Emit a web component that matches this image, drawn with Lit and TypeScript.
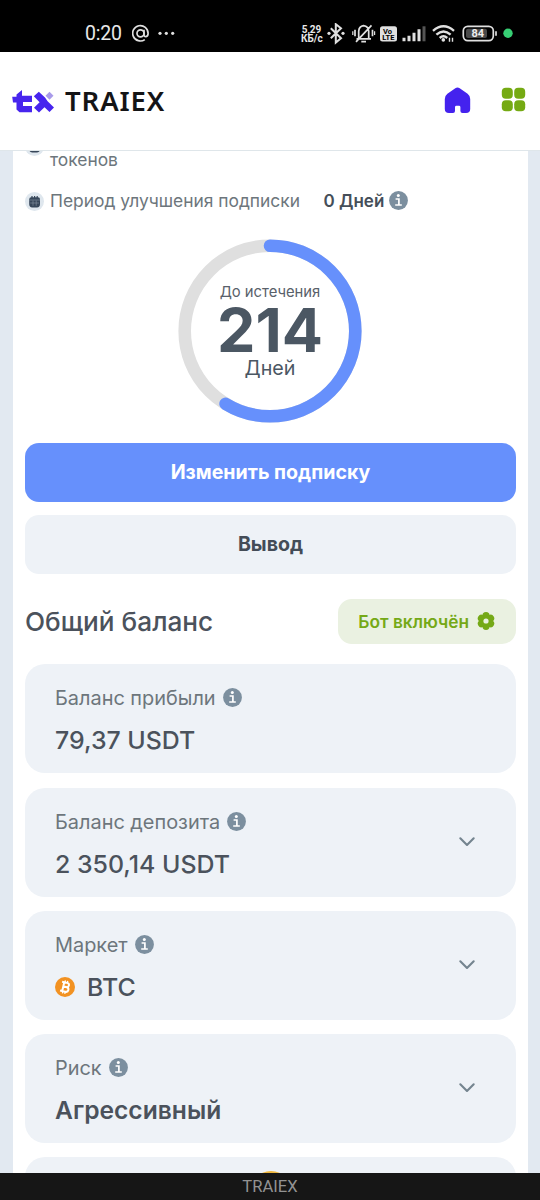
import { LitElement, html, css, svg, nothing } from "lit";
import { customElement, property } from "lit/decorators.js";
import { classMap } from "lit/directives/class-map.js";

const infoIcon = html`<svg class="info" viewBox="0 0 19 19" width="19" height="19">
  <circle cx="9.5" cy="9.5" r="9.4" fill="#7c8f9f" />
  <circle cx="9.3" cy="4.6" r="1.5" fill="#fff" />
  <path d="M6.6 8H9.9V13.6M6.2 14H12.8" fill="none" stroke="#fff" stroke-width="1.7" />
</svg>`;

const coinIcon = html`<svg class="coin" viewBox="0 0 20 20" width="20" height="20">
  <circle cx="10" cy="10" r="10" fill="#f29222" />
  <g transform="rotate(13 10 10)" fill="none" stroke="#fff" stroke-width="2">
    <path d="M6 5.5H11.2C14.2 5.5 14.2 9.8 11.2 9.8H8.2M11.2 9.8C14.9 9.8 14.9 14.6 11.2 14.6H6M8.2 5.5V14.6" />
    <path d="M8.9 3.4V5.4M11.3 3.4V5.4M8.9 14.7V16.7M11.3 14.7V16.7" stroke-width="1.3" />
  </g>
</svg>`;

const calendarIcon = html`<svg class="cal" viewBox="0 0 19 19" width="19" height="19">
  <circle cx="9.5" cy="9.5" r="9.5" fill="#dfe7ee" />
  <path d="M4.2 7.2Q4.2 5.2 6.2 5.2H13Q15 5.2 15 7.2V12Q15 15.4 12 15.4H7.2Q4.2 15.4 4.2 12Z" fill="#37475a" />
  <path d="M7 4V6.4M9.6 4V6.4M12.2 4V6.4" stroke="#37475a" stroke-width="1.2" />
  <path d="M4.2 8H15M5.2 11H14M8 8.5V13.8M11.2 8.5V13.8" stroke="#8795a3" stroke-width=".6" />
</svg>`;

@customElement("status-bar")
export class StatusBar extends LitElement {
  static styles = css`
    :host {
      display: flex;
      align-items: center;
      box-sizing: border-box;
      height: 52px;
      padding: 15px 27px 0 85px;
      background: #000;
      color: #e8e8e8;
      font-family: Roboto, sans-serif;
    }
    .time { font-size: 19.5px; letter-spacing: -0.2px; width: 47px; line-height: 22px; }
    .left { display: block; flex: none; }
    .rate { margin-left: auto; width: 21px; font-size: 10px; line-height: 9px; font-weight: 700; text-align: center; white-space: nowrap; }
    .icons { display: block; flex: none; margin-left: 5px; }
    .small { font: 700 7.5px Roboto, sans-serif; }
    .level { font: 700 11px Roboto, sans-serif; }
  `;
  render() {
    return html`
      <span class="time">0:20</span>
      <svg class="left" width="44" height="20" viewBox="132 23.7 44 20" fill="none" stroke="#e0e0e0" stroke-width="1.7">
        <circle cx="140.5" cy="33" r="3.5" />
        <path d="M144 29.5V34Q144 36.6 146 36.4Q148.1 36 148.1 33A7.7 7.7 0 1 0 144.8 39.3" />
        <g fill="#e0e0e0" stroke="none"><circle cx="160" cy="33" r="1.6" /><circle cx="166.3" cy="33" r="1.6" /><circle cx="172.7" cy="33" r="1.6" /></g>
      </svg>
      <span class="rate">5,29<br />КБ/с</span>
      <svg class="icons" width="186" height="22" viewBox="327 22.7 186 22" fill="none" stroke="#e0e0e0" stroke-width="1.7">
        <path d="M330.8 28L341 38L335.8 42.3V23.9L341 28L330.8 38" stroke-width="2" />
        <g fill="#e0e0e0" stroke="none"><circle cx="329" cy="33" r="1.6" /><circle cx="343" cy="33" r="1.6" /></g>
        <path d="M356.5 38.5H371M358.7 38V31Q359 26 363.5 25.4Q368.6 26 368.7 31V38M371.5 25L356 41.5M355 29.5V36M372.5 29.5V36M361.3 41.4H366" />
        <path d="M352.8 31V34.7M374.6 31V34.7" stroke-width="1.2" />
        <rect x="380" y="26" width="17" height="15.3" rx="2.5" fill="#e0e0e0" stroke="none" />
        <text class="small" x="383" y="33.4" fill="#000" stroke="none">Vo</text>
        <text class="small" x="382.3" y="40.2" fill="#000" stroke="none">LTE</text>
        <g stroke-width="3"><path d="M404 37.5V41M409 35.5V41M414 32.5V41M419 29V41" /><path d="M424 26V41" stroke="#555" /></g>
        <g stroke-width="2.4"><path d="M433 30.5Q443.5 21.5 454 30.5M436.4 34.3Q443.5 28 450.6 34.3M439.7 37.7Q443.5 34.3 447.2 37.7" /></g>
        <circle cx="443.3" cy="39.6" r="1.8" fill="#e0e0e0" stroke="none" />
        <path d="M449.5 37.5V41.5M452.5 37.5V41.5" stroke-width="1.4" />
        <rect x="463.3" y="26" width="30" height="14.3" rx="4.5" />
        <rect x="466" y="28.5" width="21" height="9.3" rx="2" fill="#4a4a4a" stroke="none" />
        <path d="M496 31V35.5" />
        <text class="level" x="471.5" y="37.2" fill="#eee" stroke="none">84</text>
        <circle cx="508" cy="33" r="4.7" fill="#37cf74" stroke="none" />
      </svg>
    `;
  }
}

@customElement("site-header")
export class SiteHeader extends LitElement {
  static styles = css`
    :host {
      display: flex;
      align-items: center;
      box-sizing: border-box;
      height: 99px;
      padding: 0 14px 0 12px;
      background: #fff;
      border-bottom: 1px solid #dfe6ea;
    }
    .logo { display: block; margin-top: 1px; }
    .brand { margin-left: 10px; font: 600 27.5px/32px "Noto Sans", sans-serif; letter-spacing: 0.9px; color: #141416; }
    .home { display: block; margin: -1px 0 0 auto; }
    .apps { display: block; margin: -4px 0 0 30px; }
  `;
  render() {
    return html`
      <svg class="logo" width="43" height="24" viewBox="12 90 43 24">
        <path d="M16.5 94.5L22 90V95.8H32V102H23V106H32V112.3H19.5L16.5 109.5V102.5H13L12.2 96.8H16.5Z" fill="#4725ee" />
        <path d="M33.8 96.3L38.8 91.8L45 97.6L47.6 101.2L54 107.5L49.5 112L44.5 107.2L39 112.6L34 107.7L39.6 102.2Z" fill="#4725ee" />
        <path d="M49.5 91.8L53.5 95.8L49.5 99.8L45.5 95.8Z" fill="#a99bea" />
      </svg>
      <span class="brand">TRAIEX</span>
      <svg class="home" width="27" height="27" viewBox="0 0 27 27">
        <path d="M11.3 1.2Q13.5 -.1 15.7 1.2L23.6 6.8Q26.2 8.8 26.2 12V22Q26.2 26 22 26H18.5Q16.4 26 16.4 24V20.2Q16.4 18.8 15 18.8H12.4Q11 18.8 11 20.2V24Q11 26 9 26H5Q.8 26 .8 22V12Q.8 8.8 3.4 6.8Z" fill="#4422ee" />
      </svg>
      <svg class="apps" width="25" height="25" viewBox="0 0 25 25" fill="#75aa13">
        <rect x=".8" y=".8" width="11" height="11" rx="4" /><rect x="13.2" y=".8" width="11" height="11" rx="4" />
        <rect x=".8" y="13.2" width="11" height="11" rx="4" /><rect x="13.2" y="13.2" width="11" height="11" rx="4" />
      </svg>
    `;
  }
}

@customElement("days-ring")
export class DaysRing extends LitElement {
  @property({ type: Number }) days = 0;
  @property({ type: Number }) total = 365;
  static styles = css`
    :host { display: grid; width: 184px; height: 184px; color: #4b5763; }
    .ring, .text { grid-area: 1 / 1; }
    .ring { display: block; }
    .text { display: flex; flex-direction: column; align-items: center; padding: 44px 0 0 1px; }
    .cap { font-size: 14.8px; line-height: 18px; color: #59616a; }
    .num { font-size: 61px; line-height: 58px; font-weight: 700; }
    .unit { font-size: 19.7px; line-height: 19px; }
  `;
  render() {
    const r = 85.3;
    const length = 2 * Math.PI * r;
    const filled = (length * this.days) / this.total;
    return html`
      <svg class="ring" viewBox="0 0 184 184" fill="none" stroke-width="12.6">
        <circle cx="92" cy="92" r=${r} stroke="#dfdfdf" />
        <circle cx="92" cy="92" r=${r} stroke="#6690fc" stroke-linecap="round"
          stroke-dasharray="${filled} ${length}" transform="rotate(-90 92 92)" />
      </svg>
      <div class="text">
        <span class="cap">До истечения</span>
        <span class="num">${this.days}</span>
        <span class="unit">Дней</span>
      </div>
    `;
  }
}

@customElement("balance-card")
export class BalanceCard extends LitElement {
  @property() label = "";
  @property() value = "";
  @property({ type: Boolean }) expandable = false;
  @property({ type: Boolean }) coin = false;
  @property({ type: Boolean }) strong = false;
  static styles = css`
    :host {
      display: flex;
      align-items: center;
      justify-content: space-between;
      box-sizing: border-box;
      height: 109px;
      padding: 0 40px 0 30px;
      border-radius: 20px;
      background: #eef2f7;
    }
    .body { display: flex; flex-direction: column; gap: 13px; padding-top: 2px; }
    .label { display: flex; align-items: center; gap: 7px; font-size: 19.9px; line-height: 28px; color: #6d767c; }
    .value { display: flex; align-items: center; gap: 12px; font-size: 24.9px; line-height: 30px; font-weight: 500; color: #4b525c; }
    .value.strong { font-size: 24.6px; font-weight: 600; }
    .info, .coin, .chevron { display: block; flex: none; }
    .info { margin-top: -1px; }
    .chevron { margin-top: -1px; }
  `;
  render() {
    return html`
      <div class="body">
        <div class="label">${this.label}${infoIcon}</div>
        <div class=${classMap({ value: true, strong: this.strong })}>${this.coin ? coinIcon : nothing}<span>${this.value}</span></div>
      </div>
      ${this.expandable
        ? html`<svg class="chevron" width="18" height="12" viewBox="0 0 18 12">
            <path d="M2.3 2.3L9 9L15.7 2.3" fill="none" stroke="#74848f" stroke-width="2.1" stroke-linecap="round" stroke-linejoin="round" />
          </svg>`
        : nothing}
    `;
  }
}

const petals = [0, 60, 120, 180, 240, 300].map(
  (a) => svg`<circle cx="9" cy="3.7" r="3.6" transform="rotate(${a} 9 9)" />`
);

const cards = [
  { label: "Баланс прибыли", value: "79,37 USDT", expandable: false, coin: false, strong: false },
  { label: "Баланс депозита", value: "2 350,14 USDT", expandable: true, coin: false, strong: false },
  { label: "Маркет", value: "BTC", expandable: true, coin: true, strong: false },
  { label: "Риск", value: "Агрессивный", expandable: true, coin: false, strong: true },
];

@customElement("app-root")
export class AppRoot extends LitElement {
  static styles = css`
    :host {
      display: flex;
      flex-direction: column;
      height: 1200px;
      overflow: hidden;
      background: #e2e9f1;
      font-family: Inter, sans-serif;
    }
    .panel {
      flex: 1;
      min-height: 0;
      overflow: hidden;
      margin: 0 12px 0 13px;
      padding: 0 12px;
      background: #fff;
      display: flex;
      flex-direction: column;
    }
    .panel > * { flex: none; }
    .row { display: flex; align-items: center; height: 24px; font-size: 17.4px; color: #6d767c; white-space: nowrap; }
    .row.cut { height: 38px; margin-top: -19px; }
    .row.cut .cal { margin-top: -10px; }
    .row.cut .name { align-self: flex-end; }
    .row.period { margin-top: 19px; }
    .cal, .info { display: block; flex: none; }
    .info { margin-top: -1px; }
    .name { margin-left: 6px; }
    .period .name { margin-top: -1px; }
    .days { margin: 0 5px 0 23.5px; font-size: 17px; font-weight: 600; color: #454e59; }
    .ring { align-self: center; margin: 26px 2px 0 0; }
    .btn {
      border: 0;
      padding: 0 0 2px;
      height: 59px;
      border-radius: 14px;
      font: 700 19.6px Inter, sans-serif;
      background: #eef2f7;
      color: #444c57;
    }
    .btn.primary { margin: 20px 0 13px; background: #6690fc; color: #fff; }
    .head { display: flex; align-items: center; justify-content: space-between; height: 45px; margin: 25px 0 20px; }
    .title { margin: 0; font-size: 26.2px; line-height: 32px; font-weight: 500; color: #4b525c; }
    .pill {
      display: flex; align-items: center; gap: 8px;
      box-sizing: border-box; height: 45px; padding: 0 21px 1px 20px; border-radius: 14px;
      background: #eaf1e1; color: #75a917; font-size: 17.3px; font-weight: 600;
    }
    .flower { display: block; }
    .cards { display: flex; flex-direction: column; gap: 14.6px; }
    .cards > :nth-child(4) { margin-top: -1px; }
    .next { height: 109px; border-radius: 20px; background: #eef2f7; display: flex; justify-content: center; align-items: flex-start; }
    .token { width: 44px; height: 44px; margin-top: 13.6px; border-radius: 50%; background: #eeb63e; }
    .footer { flex: none; height: 27px; background: #161616; color: #929292; text-align: center; font: 400 16.6px/27px Roboto, sans-serif; }
  `;
  render() {
    return html`
      <status-bar></status-bar>
      <site-header></site-header>
      <main class="panel">
        <div class="row cut">${calendarIcon}<span class="name">токенов</span></div>
        <div class="row period">
          ${calendarIcon}<span class="name">Период улучшения подписки</span>
          <span class="days">0 Дней</span>${infoIcon}
        </div>
        <days-ring class="ring" .days=${214} .total=${365}></days-ring>
        <button class="btn primary">Изменить подписку</button>
        <button class="btn">Вывод</button>
        <div class="head">
          <h2 class="title">Общий баланс</h2>
          <div class="pill">
            <span>Бот включён</span>
            <svg class="flower" width="18" height="18" viewBox="0 0 18 18" fill="#75a917">
              ${petals}<circle cx="9" cy="9" r="5" /><circle cx="9" cy="9" r="2.6" fill="#eaf1e1" />
            </svg>
          </div>
        </div>
        <div class="cards">
          ${cards.map(
            (c) => html`<balance-card .label=${c.label} .value=${c.value} .expandable=${c.expandable} .coin=${c.coin} .strong=${c.strong}></balance-card>`
          )}
          <div class="next"><div class="token"></div></div>
        </div>
      </main>
      <footer class="footer">TRAIEX</footer>
    `;
  }
}
